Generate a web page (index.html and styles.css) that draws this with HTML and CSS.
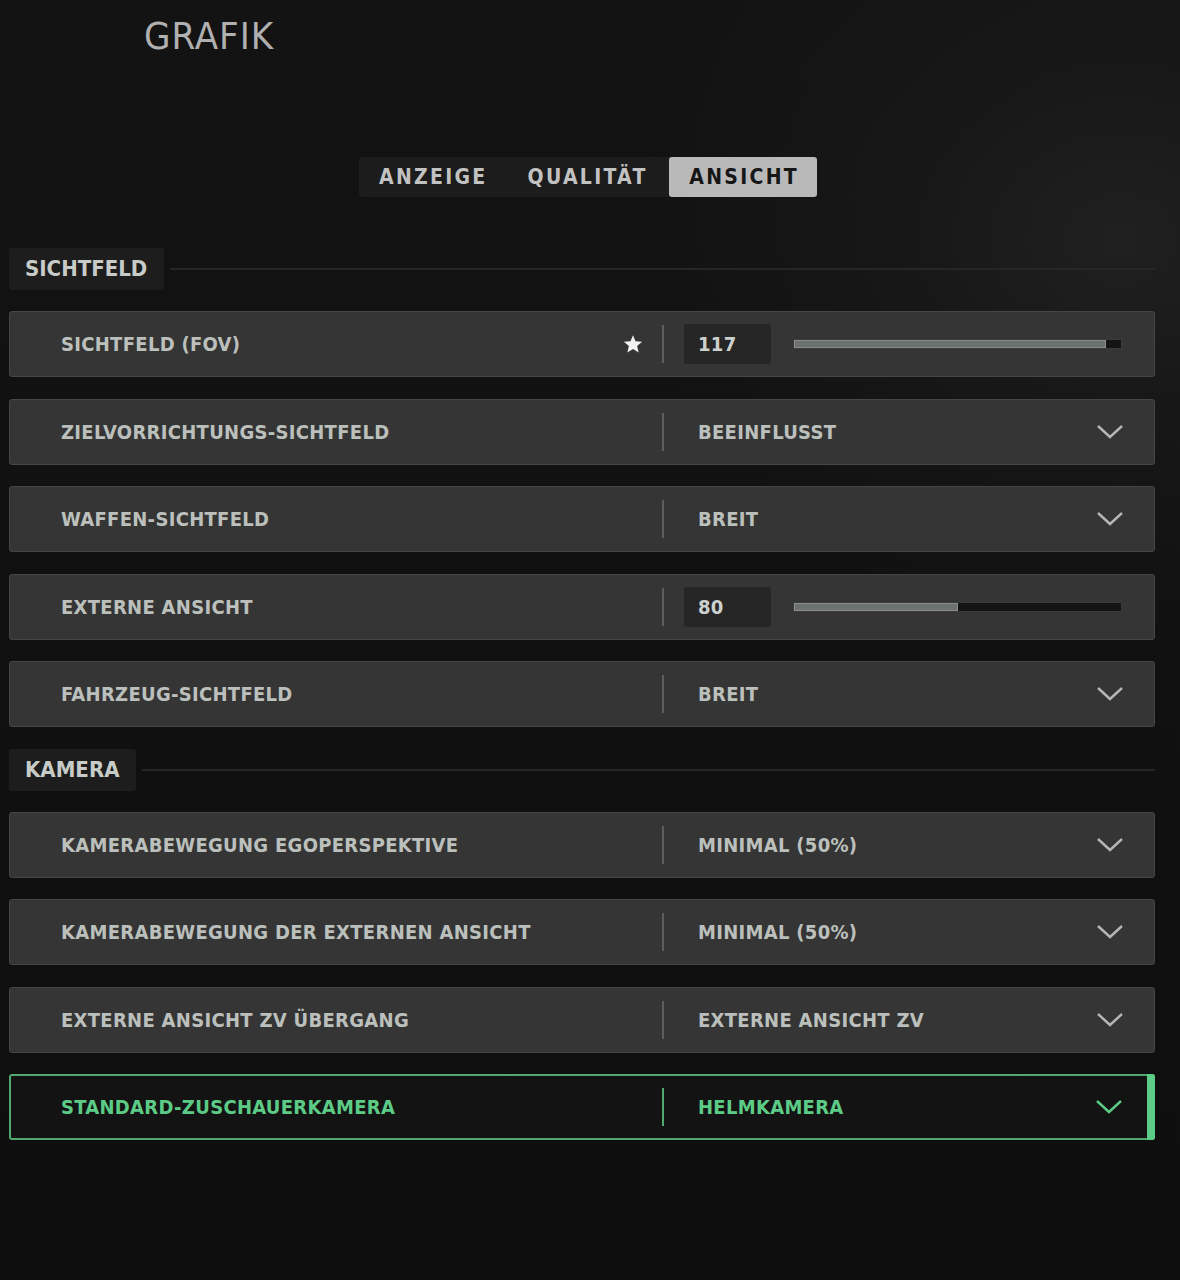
FILE: index.html
```html
<!DOCTYPE html>
<html lang="de">
  <head>
    <meta charset="UTF-8">
    <title>Grafik</title>
    <link rel="stylesheet" href="styles.css">
  </head>
  <body>
    <div id="page">
      <h1 class="title">GRAFIK</h1>

      <div class="tabs">
        <div class="tab">ANZEIGE</div>
        <div class="tab">QUALITÄT</div>
        <div class="tab current">ANSICHT</div>
      </div>

      <div class="section">
        <div class="section-title">SICHTFELD</div>
        <div class="section-line"></div>
      </div>

      <div class="row">
        <div class="name">SICHTFELD (FOV)
          <svg class="star" width="20" height="20" viewBox="0 0 20 20"><path d="M10 1.2l2.5 6.1 6.6.5-5 4.3 1.6 6.5L10 15.1l-5.7 3.5 1.6-6.5-5-4.3 6.6-.5z" fill="#f2f2f2"/></svg>
        </div>
        <div class="sep"></div>
        <div class="value slider-value">
          <div class="num">117</div>
          <div class="track"><div class="fill" style="width: 95.5%"></div></div>
        </div>
      </div>

      <div class="row">
        <div class="name">ZIELVORRICHTUNGS-SICHTFELD</div>
        <div class="sep"></div>
        <div class="value">BEEINFLUSST
          <svg class="chev" width="28" height="16" viewBox="0 0 28 16"><path d="M2 2l12 11L26 2" fill="none" stroke="currentColor" stroke-width="2.4"/></svg>
        </div>
      </div>

      <div class="row">
        <div class="name">WAFFEN-SICHTFELD</div>
        <div class="sep"></div>
        <div class="value">BREIT
          <svg class="chev" width="28" height="16" viewBox="0 0 28 16"><path d="M2 2l12 11L26 2" fill="none" stroke="currentColor" stroke-width="2.4"/></svg>
        </div>
      </div>

      <div class="row">
        <div class="name">EXTERNE ANSICHT</div>
        <div class="sep"></div>
        <div class="value slider-value">
          <div class="num">80</div>
          <div class="track"><div class="fill" style="width: 50.2%"></div></div>
        </div>
      </div>

      <div class="row">
        <div class="name">FAHRZEUG-SICHTFELD</div>
        <div class="sep"></div>
        <div class="value">BREIT
          <svg class="chev" width="28" height="16" viewBox="0 0 28 16"><path d="M2 2l12 11L26 2" fill="none" stroke="currentColor" stroke-width="2.4"/></svg>
        </div>
      </div>

      <div class="section">
        <div class="section-title">KAMERA</div>
        <div class="section-line"></div>
      </div>

      <div class="row">
        <div class="name">KAMERABEWEGUNG EGOPERSPEKTIVE</div>
        <div class="sep"></div>
        <div class="value">MINIMAL (50%)
          <svg class="chev" width="28" height="16" viewBox="0 0 28 16"><path d="M2 2l12 11L26 2" fill="none" stroke="currentColor" stroke-width="2.4"/></svg>
        </div>
      </div>

      <div class="row">
        <div class="name">KAMERABEWEGUNG DER EXTERNEN ANSICHT</div>
        <div class="sep"></div>
        <div class="value">MINIMAL (50%)
          <svg class="chev" width="28" height="16" viewBox="0 0 28 16"><path d="M2 2l12 11L26 2" fill="none" stroke="currentColor" stroke-width="2.4"/></svg>
        </div>
      </div>

      <div class="row">
        <div class="name">EXTERNE ANSICHT ZV ÜBERGANG</div>
        <div class="sep"></div>
        <div class="value">EXTERNE ANSICHT ZV
          <svg class="chev" width="28" height="16" viewBox="0 0 28 16"><path d="M2 2l12 11L26 2" fill="none" stroke="currentColor" stroke-width="2.4"/></svg>
        </div>
      </div>

      <div class="row active">
        <div class="name">STANDARD-ZUSCHAUERKAMERA</div>
        <div class="sep"></div>
        <div class="value">HELMKAMERA
          <svg class="chev" width="28" height="16" viewBox="0 0 28 16"><path d="M2 2l12 11L26 2" fill="none" stroke="currentColor" stroke-width="2.4"/></svg>
        </div>
      </div>
    </div>
  </body>
</html>
```

FILE: styles.css
```css
html, body, div, h1 { margin: 0; padding: 0; }
body { background: #101010; background-image: radial-gradient(ellipse 480px 400px at 1120px 240px, #202020 0%, rgba(28,28,28,0.5) 45%, rgba(16,16,16,0) 100%), linear-gradient(180deg, #131313 0%, #0e0e0e 100%); min-height: 1280px; font-family: "DejaVu Sans Condensed", "DejaVu Sans", sans-serif; font-weight: 700; color: #bcc0bc; }
#page { padding: 0 25px 0 9px; }

.title { padding: 14px 0 0 135px; height: 157px; box-sizing: border-box; font-size: 38px; line-height: 44px; font-weight: 400; color: #b0b0b0; letter-spacing: 1px; }

.tabs { display: flex; width: 458px; height: 40px; margin: 0 0 51px 350px; background: #1c1c1c; border-radius: 3px; }
.tab { height: 40px; line-height: 40px; padding: 0 20px; font-size: 21px; letter-spacing: 2.3px; color: #c2c2c2; }
.tab.current { background: #b9b9b9; color: #161616; border-radius: 3px; margin-left: auto; padding: 0 18px 0 20px; }

.section { display: flex; align-items: center; margin: 0 0 21px; }
.row + .section { margin-top: 1.5px; }
.section-title { height: 42px; line-height: 42px; padding: 0 17px 0 16px; font-size: 22px; color: #c8ccc8; background: #1d1d1d; border-radius: 3px; }
.section-line { flex: 1; height: 2px; background: #262626; margin-left: 6px; }

.row { display: flex; align-items: center; height: 66px; box-sizing: border-box; margin-bottom: 21.5px; background: #353535; border: 1px solid #464646; border-radius: 3px; font-size: 20px; letter-spacing: 0.3px; }
.name { display: flex; align-items: center; width: 601px; flex: 0 0 601px; padding-left: 51px; }
.star { margin-left: auto; margin-right: 19px; }
.sep { width: 2px; height: 38px; background: #5e5e5e; }
.value { display: flex; align-items: center; flex: 1; padding: 0 30px 0 34px; }
.chev { margin-left: auto; color: #b4b8b4; }

.slider-value { padding-left: 20px; }
.num { width: 73px; height: 40px; line-height: 40px; padding-left: 14px; background: #262626; border-radius: 3px; color: #cdd1cd; }
.track { width: 327px; height: 8px; margin-left: 22px; background: #141414; border: 1px solid #3a3a3a; }
.fill { height: 8px; background: #6e726e; box-shadow: inset 0 0 0 1px #8a8e8a; }

.row.active { background: #131313; border: 2px solid #4fa870; color: #5ccb86; position: relative; }
.row.active .name { padding-left: 50px; }
.row.active .sep { background: #4fa870; }
.row.active .chev { color: #5ccb86; }
.row.active::after { content: ""; position: absolute; top: -2px; right: -2px; bottom: -2px; width: 8px; background: #5ccb86; border-radius: 0 3px 3px 0; }
```
